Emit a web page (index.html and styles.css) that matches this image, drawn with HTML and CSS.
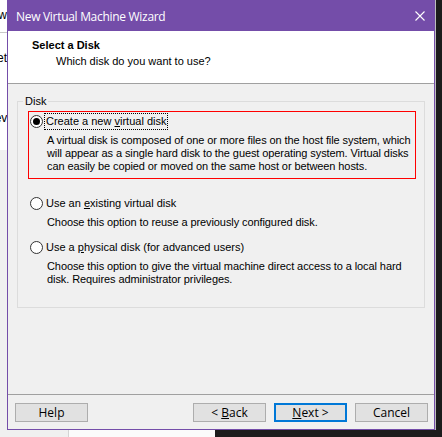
FILE: index.html
```html
<!DOCTYPE html>
<html>
<head>
<meta charset="utf-8">
<link rel="stylesheet" href="styles.css">
</head>
<body>
<div class="desktop">
  <div class="behind">
    <div class="behind-top"><span class="frag frag-1">New</span></div>
    <span class="frag frag-2">Delete</span>
    <span class="frag frag-3">Revi</span>
    <div class="behind-bottom"></div>
  </div>
  <div class="dialog">
    <div class="titlebar">
      <span class="title">New Virtual Machine Wizard</span>
      <svg class="close" width="10" height="10" viewBox="0 0 10 10"><path d="M0.5 0.5 L9.5 9.5 M9.5 0.5 L0.5 9.5" stroke="#fff" stroke-width="1.1" fill="none"/></svg>
    </div>
    <div class="header">
      <div class="h-title">Select a Disk</div>
      <div class="h-sub">Which disk do you want to use?</div>
    </div>
    <div class="content">
      <fieldset class="group">
        <legend>Disk</legend>
        <div class="option selected">
          <div class="row"><span class="radio checked"></span><span class="label focus">Create a new <u>v</u>irtual disk</span></div>
          <div class="desc">A virtual disk is composed of one or more files on the host file system, which<br>will appear as a single hard disk to the guest operating system. Virtual disks<br>can easily be copied or moved on the same host or between hosts.</div>
        </div>
        <div class="option opt-2">
          <div class="row"><span class="radio"></span><span class="label">Use an <u>e</u>xisting virtual disk</span></div>
          <div class="desc">Choose this option to reuse a previously configured disk.</div>
        </div>
        <div class="option opt-3">
          <div class="row"><span class="radio"></span><span class="label">Use a <u>p</u>hysical disk (for advanced users)</span></div>
          <div class="desc">Choose this option to give the virtual machine direct access to a local hard<br>disk. Requires administrator privileges.</div>
        </div>
      </fieldset>
    </div>
    <div class="buttons">
      <button class="btn">Help</button>
      <span class="spacer"></span>
      <button class="btn">&lt; <u>B</u>ack</button>
      <button class="btn default"><u>N</u>ext &gt;</button>
      <button class="btn">Cancel</button>
    </div>
  </div>
</div>
</body>
</html>
```
FILE: styles.css
```css
* { box-sizing: border-box; }
html, body { margin: 0; padding: 0; }
body { background: #1c1c1c; }

.desktop {
  position: relative;
  width: 442px;
  height: 437px;
  overflow: hidden;
  background: #1c1c1c;
  font-family: "Liberation Sans", Arial, sans-serif;
}

.behind {
  position: absolute;
  left: 0;
  top: 0;
  width: 215px;
  height: 437px;
  background: #fff;
}
.behind-top {
  height: 33px;
  border-bottom: 1px solid #c8c8c8;
  background: #fff;
}
.behind-bottom {
  position: absolute;
  left: 0;
  right: 0;
  top: 150px;
  bottom: 0;
  background: linear-gradient(to right, #f0f0f0 68px, #d4d4d4 68px, #d4d4d4 69px, #fbfbfb 69px);
}
.frag {
  position: absolute;
  font-size: 12px;
  color: #000;
}
.frag-1 { left: -17px; top: 8px; }
.frag-2 { left: -21px; top: 51px; }
.frag-3 { left: -14px; top: 111px; }

.dialog {
  position: relative;
  margin-left: 7px;
  width: 428px;
  height: 430px;
  border: 1px solid #744da9;
  border-top: 0;
  background: #f0f0f0;
  box-shadow: 1px 0 0 #bdbdbd;
  display: flex;
  flex-direction: column;
}

.titlebar {
  height: 31px;
  margin: 0 -1px;
  background: #744da9;
  display: flex;
  align-items: center;
  padding-left: 9px;
  padding-right: 10px;
  flex: none;
}
.title {
  flex: 1;
  color: #fff;
  font-family: "Open Sans", "Noto Sans", sans-serif;
  font-size: 12px;
  letter-spacing: -0.3px;
  padding-top: 1px;
}
.close { display: block; }

.header {
  height: 53px;
  background: #fff;
  border-bottom: 1px solid #a0a0a0;
  flex: none;
  font-size: 11px;
  color: #000;
}
.h-title {
  font-weight: bold;
  padding: 8px 0 0 24px;
  line-height: 13px;
}
.h-sub {
  padding: 3px 0 0 48px;
  line-height: 13px;
}

.content {
  height: 311px;
  border-bottom: 1px solid #a0a0a0;
  padding: 11px 9px 0 9px;
  flex: none;
  font-size: 11px;
  color: #000;
}

.group {
  margin: 0;
  padding: 3px 8px 15px 10px;
  border: 1px solid #dcdcdc;
  min-width: 0;
}
.group legend {
  padding: 0 2px;
  margin-left: -5px;
  line-height: 13px;
  font-size: 11px;
}

.option {
  border: 1px solid transparent;
  padding: 1px 0 5px 1px;
}
.option.selected { border-color: #ff0000; }
.opt-2 { margin-top: 14px; }
.opt-3 { margin-top: 2px; }

.row {
  height: 17px;
  display: flex;
  align-items: center;
}
.radio {
  width: 13px;
  height: 13px;
  border: 1px solid #333;
  border-radius: 50%;
  background: #fff;
  flex: none;
  display: flex;
  align-items: center;
  justify-content: center;
}
.radio.checked::after {
  content: "";
  width: 7px;
  height: 7px;
  border-radius: 50%;
  background: #000;
}
.label {
  margin-left: 1px;
  height: 17px;
  line-height: 15px;
  padding: 0 1px;
  border: 1px dotted transparent;
  white-space: nowrap;
}
.label.focus { border-color: #000; }

.desc {
  margin-top: 4px;
  margin-left: 17px;
  line-height: 13px;
  letter-spacing: -0.09px;
  white-space: nowrap;
}

.buttons {
  flex: 1;
  display: flex;
  padding: 8px 6px 0 7px;
  align-items: flex-start;
}
.spacer { flex: 1; }
.btn {
  width: 73px;
  height: 19px;
  margin: 0;
  padding: 0;
  background: #e1e1e1;
  border: 1px solid #adadad;
  font-family: "Open Sans", "Noto Sans", sans-serif;
  font-size: 12px;
  line-height: 15px;
  color: #000;
}
.btn + .btn { margin-left: 8px; }
.btn.default { border: 2px solid #0078d7; }
```
